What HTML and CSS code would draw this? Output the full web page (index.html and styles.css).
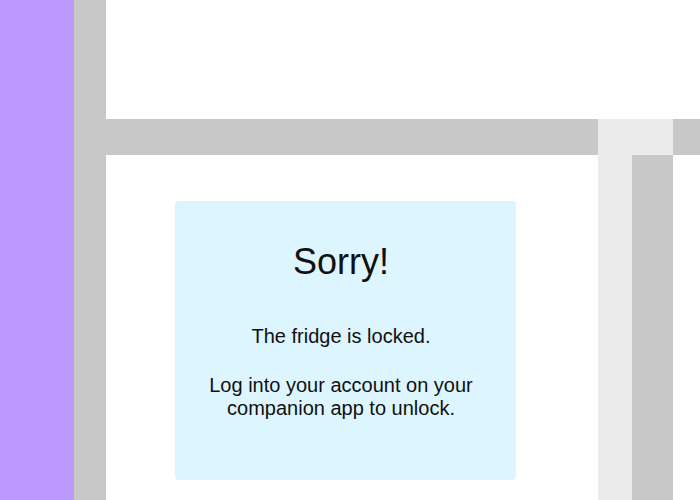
FILE: index.html
```html
<!DOCTYPE html>
<html>
<head>
<meta charset="utf-8">
<link rel="stylesheet" href="styles.css">
</head>
<body>
<div class="layout">
  <div class="rail"></div>
  <div class="rail-edge"></div>
  <div class="top"></div>
  <div class="bar"></div>
  <div class="bar-light"></div>
  <div class="bar-end"></div>
  <div class="side-light"></div>
  <div class="side-gray"></div>
  <div class="side-white"></div>
  <main class="main">
    <section class="card">
      <h1 class="title">Sorry!</h1>
      <p class="msg">The fridge is locked.</p>
      <p class="msg msg-next">Log into your account on your companion app to unlock.</p>
    </section>
  </main>
</div>
</body>
</html>
```
FILE: styles.css
```css
html, body {
  margin: 0;
  padding: 0;
  background: #ffffff;
}
body {
  font-family: "Liberation Sans", Arial, sans-serif;
  color: #111111;
}
.layout {
  display: grid;
  width: 700px;
  height: 500px;
  overflow: hidden;
  grid-template-columns: 74px 32px 492px 34px 41px 27px;
  grid-template-rows: 119px 36px 345px;
  grid-template-areas:
    "rail edge top   top   top   top"
    "rail edge bar   light light end"
    "rail edge main  slight sgray swhite";
}
.rail { grid-area: rail; background: #bb99ff; }
.rail-edge { grid-area: edge; background: #c8c8c8; }
.top { grid-area: top; background: #ffffff; }
.bar { grid-area: bar; background: #c8c8c8; }
.bar-light { grid-area: light; background: #ebebeb; }
.bar-end { grid-area: end; background: #c8c8c8; }
.side-light { grid-area: slight; background: #ebebeb; }
.side-gray { grid-area: sgray; background: #c8c8c8; }
.side-white { grid-area: swhite; background: #ffffff; }
.main {
  grid-area: main;
  background: #ffffff;
  padding: 46px 0 0 69px;
}
.card {
  box-sizing: border-box;
  width: 341px;
  height: 279px;
  background: #ddf5fe;
  border-radius: 4px;
  padding: 40px 29px 0 20px;
  text-align: center;
}
.title {
  margin: 0 0 42px;
  font-size: 36px;
  font-weight: normal;
  line-height: normal;
}
.msg {
  margin: 0;
  font-size: 20px;
  line-height: normal;
}
.msg-next {
  margin-top: 26px;
}
```
